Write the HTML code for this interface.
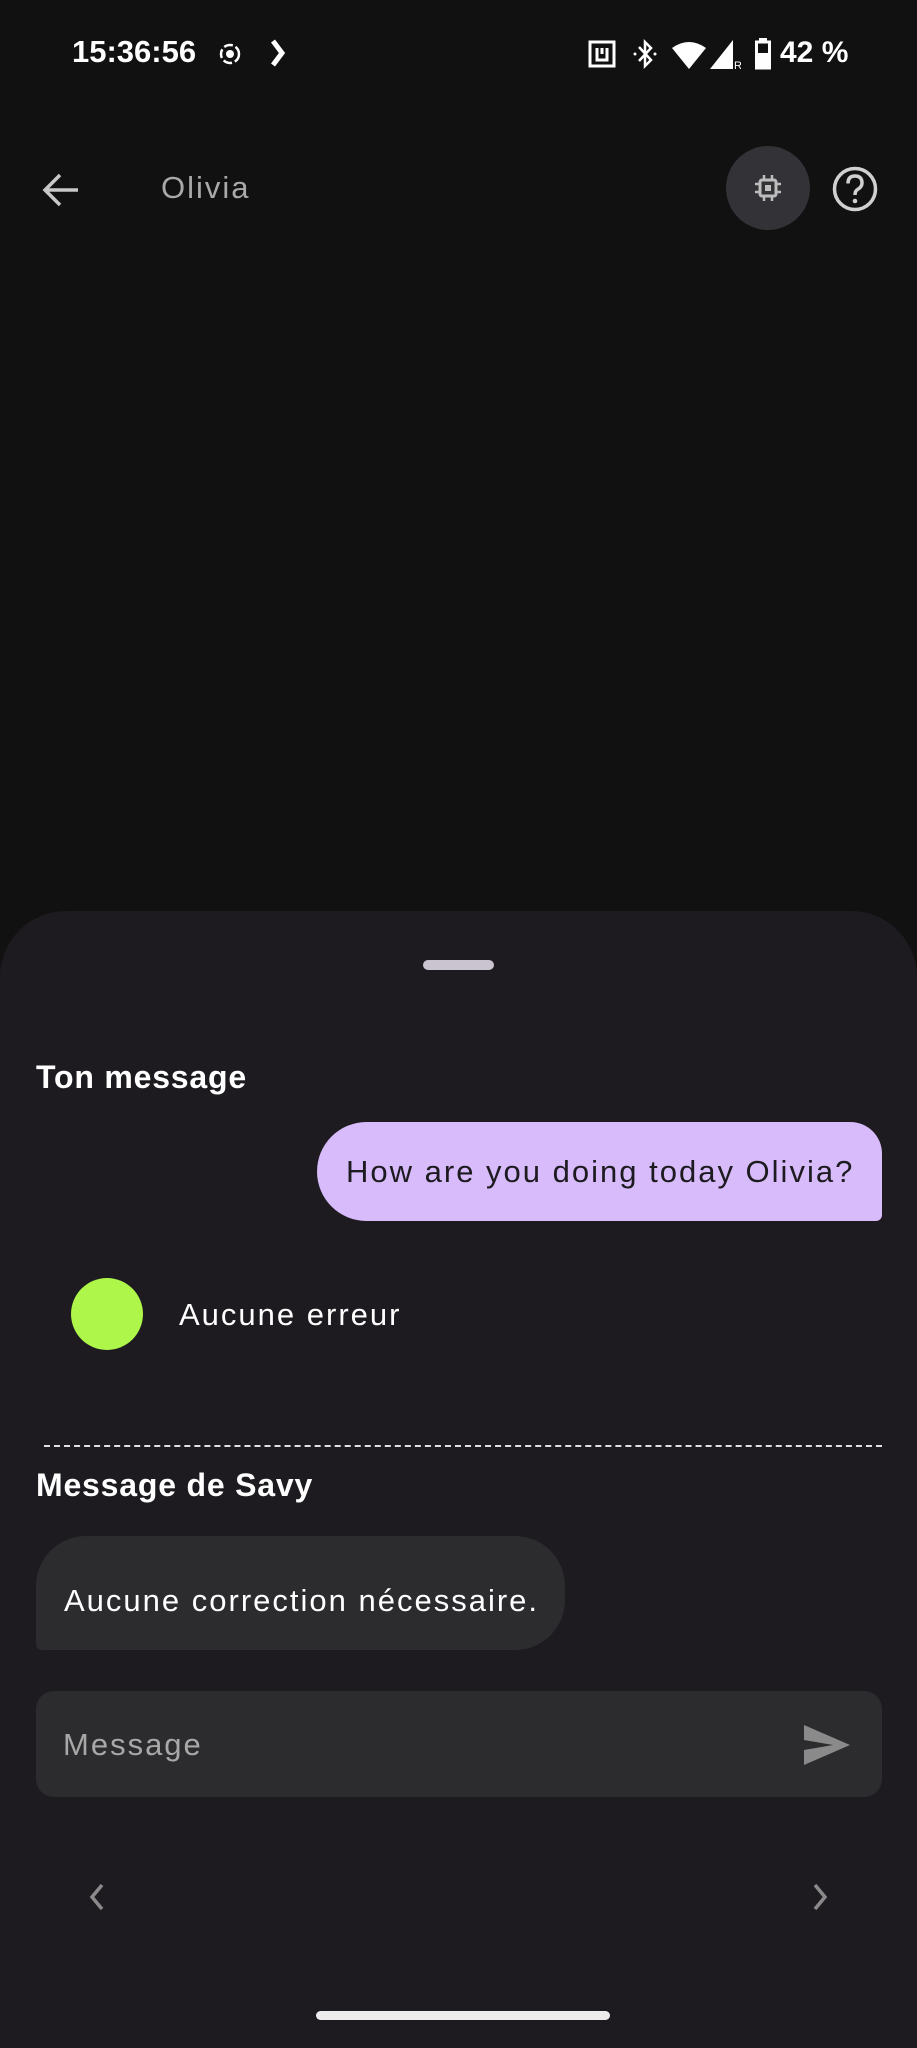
<!DOCTYPE html>
<html><head><meta charset="utf-8"><style>
*{margin:0;padding:0;box-sizing:border-box}
html,body{width:917px;height:2048px;background:#111111;overflow:hidden;font-family:"Liberation Sans",sans-serif;color:#fff}
.abs{position:absolute}
.sheet{position:absolute;left:0;top:911px;width:917px;height:1137px;background:#1d1b20;border-radius:66px 66px 0 0}
.r{letter-spacing:2px}
.b{letter-spacing:0.8px;font-weight:bold}
</style></head><body>
<!-- status bar -->
<div class="abs" style="left:72px;top:34px;font-size:31px;font-weight:bold;color:#fff">15:36:56</div>
<svg class="abs" style="left:218px;top:42px" width="24" height="24" viewBox="0 0 24 24"><circle cx="12" cy="12" r="9" fill="none" stroke="#fff" stroke-width="2.5" stroke-dasharray="9 3"/><circle cx="12" cy="12" r="4" fill="#fff"/></svg>
<svg class="abs" style="left:268px;top:38px" width="20" height="30" viewBox="0 0 20 30"><path d="M5 3 L14 15 L5 27" fill="none" stroke="#fff" stroke-width="5"/></svg>
<svg class="abs" style="left:588px;top:40px" width="28" height="28" viewBox="0 0 28 28"><rect x="2" y="2" width="24" height="24" fill="none" stroke="#fff" stroke-width="3"/><path d="M9 8v12h10V8" fill="none" stroke="#fff" stroke-width="3"/><path d="M14 8v6" stroke="#fff" stroke-width="3"/></svg>
<svg class="abs" style="left:633px;top:38px" width="24" height="32" viewBox="0 0 24 32"><path d="M6 9 L18 22 L12 28 L12 4 L18 10 L6 23" fill="none" stroke="#fff" stroke-width="2.5"/><circle cx="2" cy="16" r="1.5" fill="#fff"/><circle cx="22" cy="16" r="1.5" fill="#fff"/></svg>
<svg class="abs" style="left:671px;top:40px" width="36" height="30" viewBox="0 0 36 30"><path d="M1 8 Q18 -4 35 8 L18 29 Z" fill="#fff"/></svg>
<svg class="abs" style="left:709px;top:38px" width="32" height="32" viewBox="0 0 32 32"><path d="M1 31 L24 2 L24 31 Z" fill="#fff"/><text x="25" y="31" font-size="11" fill="#fff" font-family="Liberation Sans">R</text></svg>
<svg class="abs" style="left:755px;top:38px" width="16" height="32" viewBox="0 0 16 32"><rect x="4" y="0" width="8" height="4" fill="#fff"/><rect x="1.5" y="4" width="13" height="26" fill="none" stroke="#fff" stroke-width="3"/><rect x="1" y="15" width="14" height="15" fill="#fff"/></svg>
<div class="abs" style="left:780px;top:36px;font-size:30px;font-weight:bold;color:#fff">42 %</div>

<!-- toolbar -->
<svg class="abs" style="left:40px;top:170px" width="42" height="40" viewBox="0 0 42 40"><path d="M38 20 H6 M20 5 L5 20 L20 35" fill="none" stroke="#c8c8c8" stroke-width="3.5"/></svg>
<div class="abs r" style="left:161px;top:170px;font-size:31px;color:#a9a9a9">Olivia</div>
<div class="abs" style="left:726px;top:146px;width:84px;height:84px;border-radius:50%;background:#333236"></div>
<svg class="abs" style="left:752px;top:172px" width="32" height="32" viewBox="0 0 32 32"><rect x="8" y="8" width="16" height="16" rx="2" fill="none" stroke="#bdbdbd" stroke-width="3"/><rect x="13" y="13" width="6" height="6" fill="#bdbdbd"/><path d="M12 3v5M20 3v5M12 24v5M20 24v5M3 12h5M3 20h5M24 12h5M24 20h5" stroke="#bdbdbd" stroke-width="2.5"/></svg>
<svg class="abs" style="left:831px;top:165px" width="48" height="48" viewBox="0 0 48 48"><circle cx="24" cy="24" r="20.5" fill="none" stroke="#d0d0d0" stroke-width="3.5"/><path d="M17 18.5 Q17 11 24 11 Q31 11 31 18 Q31 22 26.5 24.5 Q24 26 24 30" fill="none" stroke="#d0d0d0" stroke-width="3.5"/><circle cx="24" cy="36" r="2.3" fill="#d0d0d0"/></svg>

<!-- sheet -->
<div class="sheet"></div>
<div class="abs" style="left:423px;top:960px;width:71px;height:10px;border-radius:5px;background:#cac4d0"></div>

<div class="abs b" style="left:36px;top:1059px;font-size:32px;color:#fff">Ton message</div>
<div class="abs" style="left:317px;top:1122px;width:565px;height:99px;background:#d7bbfa;border-radius:50px 32px 6px 50px"></div>
<div class="abs r" style="left:346px;top:1154px;font-size:31px;color:#1d1b20;white-space:nowrap">How are you doing today Olivia?</div>

<div class="abs" style="left:71px;top:1278px;width:72px;height:72px;border-radius:50%;background:#aef64a"></div>
<div class="abs r" style="left:179px;top:1297px;font-size:31px;color:#fff">Aucune erreur</div>

<div class="abs" style="left:44px;top:1445px;width:838px;border-top:2.5px dashed #e0e0e0"></div>

<div class="abs b" style="left:36px;top:1467px;font-size:32px;color:#fff">Message de Savy</div>
<div class="abs" style="left:36px;top:1536px;width:529px;height:114px;background:#2c2b2e;border-radius:50px 50px 50px 6px"></div>
<div class="abs r" style="left:64px;top:1583px;font-size:31px;color:#fff;white-space:nowrap">Aucune correction nécessaire.</div>

<div class="abs" style="left:36px;top:1691px;width:846px;height:106px;background:#2c2b2e;border-radius:18px"></div>
<div class="abs r" style="left:63px;top:1727px;font-size:31px;color:#a8a8a8">Message</div>
<svg class="abs" style="left:803px;top:1724px" width="48" height="42" viewBox="0 0 48 42"><path d="M1 1 L47 21 L1 41 L1 26 L30 21 L1 16 Z" fill="#8a8a8a"/></svg>

<svg class="abs" style="left:86px;top:1882px" width="24" height="30" viewBox="0 0 24 30"><path d="M16 3 L6 15 L16 27" fill="none" stroke="#8a8a8a" stroke-width="3.5"/></svg>
<svg class="abs" style="left:807px;top:1882px" width="24" height="30" viewBox="0 0 24 30"><path d="M8 3 L18 15 L8 27" fill="none" stroke="#8a8a8a" stroke-width="3.5"/></svg>

<div class="abs" style="left:316px;top:2011px;width:294px;height:9px;border-radius:5px;background:#ececec"></div>
</body></html>
